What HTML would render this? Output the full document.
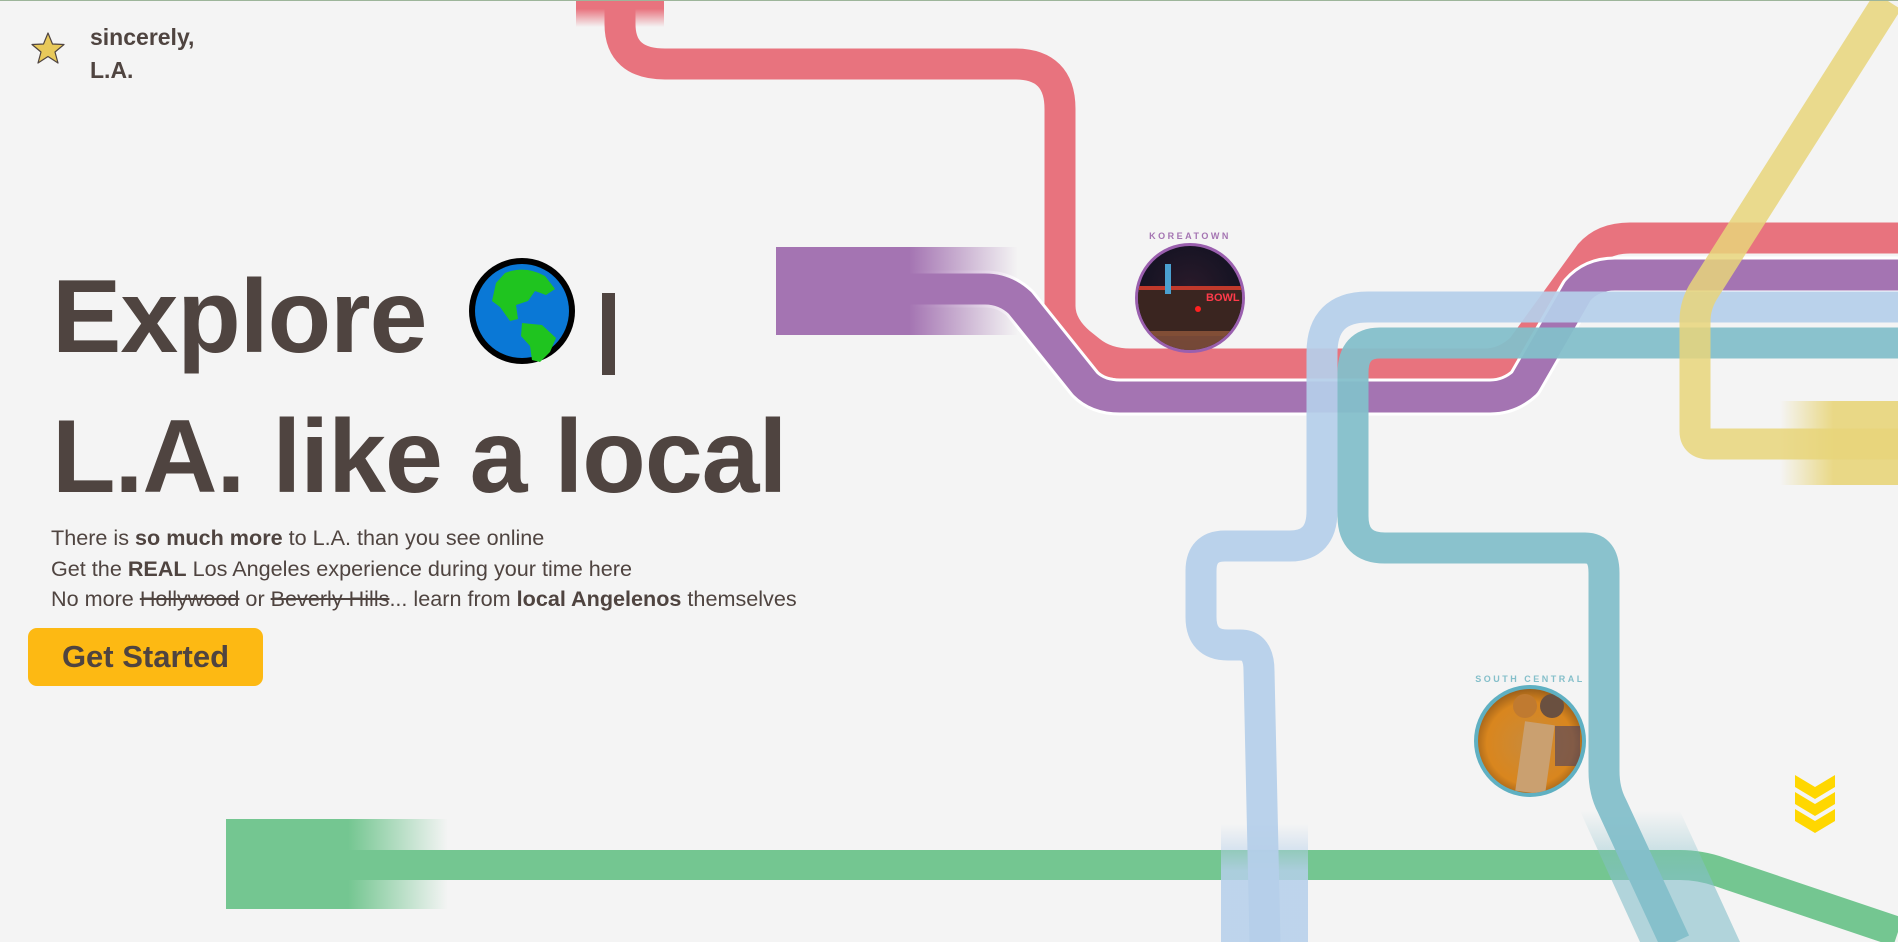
<!DOCTYPE html>
<html><head><meta charset="utf-8"><style>
html,body{margin:0;padding:0;}
body{width:1898px;height:941px;background:#f4f4f4;overflow:hidden;position:relative;font-family:"Liberation Sans",sans-serif;color:#4f4440;border-top:1px solid #9db59a;box-sizing:border-box}
svg.map{position:absolute;left:0;top:0}
.logo{position:absolute;left:90px;top:20px;font-weight:bold;font-size:23px;line-height:33px;color:#4f4440}
.h1{position:absolute;left:52px;font-weight:bold;font-size:104px;letter-spacing:-1px;line-height:1;white-space:nowrap}
.p{position:absolute;left:51px;top:522px;font-size:21.6px;line-height:30.5px;white-space:nowrap}
.btn{position:absolute;left:28px;top:627px;width:235px;height:58px;background:#fdb913;border-radius:9px;font-weight:bold;font-size:31px;line-height:58px;text-align:center}
</style></head><body>
<svg class="map" width="1898" height="941" viewBox="0 0 1898 941">
<defs>
<linearGradient id="fr" x1="0" y1="0" x2="1" y2="0"><stop offset="0.55" stop-color="#a474b2"/><stop offset="1" stop-color="#a474b2" stop-opacity="0"/></linearGradient>
<linearGradient id="fg" x1="0" y1="0" x2="1" y2="0"><stop offset="0.55" stop-color="#74c691"/><stop offset="1" stop-color="#74c691" stop-opacity="0"/></linearGradient>
<linearGradient id="fy" x1="0" y1="0" x2="1" y2="0"><stop offset="0" stop-color="#e8d57a" stop-opacity="0"/><stop offset="0.45" stop-color="#e8d57a"/></linearGradient>
<linearGradient id="frd" x1="0" y1="0" x2="0" y2="1"><stop offset="0.3" stop-color="#e8737e"/><stop offset="1" stop-color="#e8737e" stop-opacity="0"/></linearGradient>
<linearGradient id="fb" x1="0" y1="0" x2="0" y2="1"><stop offset="0" stop-color="#b5cfea" stop-opacity="0"/><stop offset="0.4" stop-color="#b5cfea"/></linearGradient>
<linearGradient id="ft" x1="0" y1="0" x2="0" y2="1"><stop offset="0" stop-color="#84bfca" stop-opacity="0"/><stop offset="0.5" stop-color="#84bfca" stop-opacity="0.6"/></linearGradient>
<radialGradient id="kt" cx="0.5" cy="0.4" r="0.6"><stop offset="0" stop-color="#2a1a2a"/><stop offset="1" stop-color="#0b1020"/></radialGradient>
<radialGradient id="sc" cx="0.5" cy="0.5" r="0.6"><stop offset="0" stop-color="#c98a3a"/><stop offset="0.6" stop-color="#d9861e"/><stop offset="1" stop-color="#5a3515"/></radialGradient>
<clipPath id="c1"><circle cx="1190" cy="297" r="52"/></clipPath>
<clipPath id="c2"><circle cx="1530" cy="740" r="52"/></clipPath>
</defs>
<g fill="none" stroke-width="31" stroke-linejoin="round">
<rect x="226" y="818" width="222" height="90" fill="url(#fg)" stroke="none"/>
<path d="M226,864 H1680 Q1700,864 1720,871 L1898,931" stroke="#74c691" stroke-width="30"/>
<rect x="576" y="0" width="88" height="26" fill="url(#frd)" stroke="none"/>
<path d="M620,0 V23 Q620,63 665,63 H1015 Q1060,63 1060,108 V305 Q1060,325 1080,342 L1090,350 Q1106,363 1130,363 H1485 Q1505,363 1522,347 L1590,253 Q1604,237 1630,237 H1898" stroke="#e8737e"/>
<path d="M776,288 H985 Q1005,288 1020,302 L1085,383 Q1098,396 1120,396 H1490 Q1510,396 1525,382 L1578,290 Q1592,274 1615,274 H1898" stroke="#fff" stroke-width="37"/>
<path d="M776,288 H985 Q1005,288 1020,302 L1085,383 Q1098,396 1120,396 H1490 Q1510,396 1525,382 L1578,290 Q1592,274 1615,274 H1898" stroke="#a474b2"/>
<rect x="776" y="246" width="242" height="88" fill="url(#fr)" stroke="none"/>
<rect x="1221" y="823" width="87" height="118" fill="url(#fb)" stroke="none" opacity="0.85"/>
<path d="M1898,306 H1368 Q1322,306 1322,352 V510 Q1322,545 1290,545 H1225 Q1201,545 1201,570 V616 Q1201,644 1228,644 H1240 Q1259,644 1259,670 L1265,941" stroke="#b5cfea" stroke-opacity="0.93"/>
<polygon points="1580,810 1680,810 1740,941 1640,941" fill="url(#ft)" stroke="none"/>
<path d="M1898,342 H1380 Q1353,342 1353,372 V515 Q1353,547 1385,547 H1585 Q1604,547 1604,572 V770 Q1604,790 1612,805 L1675,941" stroke="#84bfca" stroke-opacity="0.95"/>
<rect x="1780" y="400" width="118" height="84" fill="url(#fy)" stroke="none" opacity="0.9"/>
<path d="M1888,0 L1705,288 Q1695,303 1695,320 V430 Q1695,443 1710,443 H1898" stroke="#e8d57a" stroke-opacity="0.85"/>
</g>
<text x="1190" y="238" text-anchor="middle" font-family="Liberation Sans,sans-serif" font-size="9" font-weight="bold" letter-spacing="2.5" fill="#a474b2">KOREATOWN</text>
<circle cx="1190" cy="297" r="55" fill="#9a5fae"/>
<g clip-path="url(#c1)">
<rect x="1130" y="240" width="120" height="120" fill="url(#kt)"/>
<rect x="1135" y="285" width="110" height="50" fill="#3a2520"/>
<rect x="1135" y="285" width="110" height="4" fill="#c0392b"/>
<rect x="1165" y="263" width="6" height="30" fill="#4aa0d0"/>
<text x="1206" y="300" font-size="11" font-weight="bold" fill="#ff3b4a" font-family="Liberation Sans,sans-serif">BOWL</text>
<circle cx="1198" cy="308" r="3" fill="#ff2020"/>
<rect x="1130" y="330" width="120" height="20" fill="#a06040" opacity="0.7"/>
</g>
<text x="1530" y="681" text-anchor="middle" font-family="Liberation Sans,sans-serif" font-size="9" font-weight="bold" letter-spacing="2.5" fill="#84bfca">SOUTH CENTRAL</text>
<circle cx="1530" cy="740" r="56" fill="#5fb0c2"/>
<g clip-path="url(#c2)">
<rect x="1470" y="685" width="120" height="115" fill="url(#sc)"/>
<rect x="1520" y="722" width="30" height="70" fill="#caa070" transform="rotate(8 1535 757)"/>
<circle cx="1525" cy="705" r="12" fill="#c07a30"/><circle cx="1552" cy="705" r="12" fill="#6a5040"/>
<rect x="1555" y="725" width="25" height="40" fill="#4a4060" opacity="0.6"/>
</g>
<g fill="#ffd700">
<path d="M1795,774 L1815,786 L1835,774 V786 L1815,798 L1795,786Z"/>
<path d="M1795,791 L1815,803 L1835,791 V803 L1815,815 L1795,803Z"/>
<path d="M1795,808 L1815,820 L1835,808 V820 L1815,832 L1795,820Z"/>
</g>
<path d="M48,32 L52.5,43 L64,43.5 L55,51 L58,62 L48,55.5 L38,62 L41,51 L32,43.5 L43.5,43Z" fill="#e8c95a" stroke="#4f4440" stroke-width="1.2" stroke-linejoin="round"/>
<circle cx="522" cy="310" r="53" fill="#000"/>
<circle cx="522" cy="310" r="47" fill="#0a78d6"/>
<path d="M505,272 Q525,264 545,275 L555,288 L546,294 L535,290 L528,300 L516,304 L518,318 L510,320 L500,306 L492,300 L496,282Z" fill="#1fc41f"/>
<path d="M522,322 L542,324 L556,337 L550,351 L540,361 L532,359 L530,345 L521,335Z" fill="#1fc41f"/>
<rect x="602" y="292" width="13" height="82" fill="#4f4440"/>
</svg>
<div class="logo">sincerely,<br>L.A.</div>
<div class="h1" style="top:264px">Explore</div>
<div class="h1" style="top:404px">L.A. like a local</div>
<div class="p">There is <b>so much more</b> to L.A. than you see online<br>Get the <b>REAL</b> Los Angeles experience during your time here<br>No more <s>Hollywood</s> or <s>Beverly Hills</s>... learn from <b>local Angelenos</b> themselves</div>
<div class="btn">Get Started</div>
</body></html>
